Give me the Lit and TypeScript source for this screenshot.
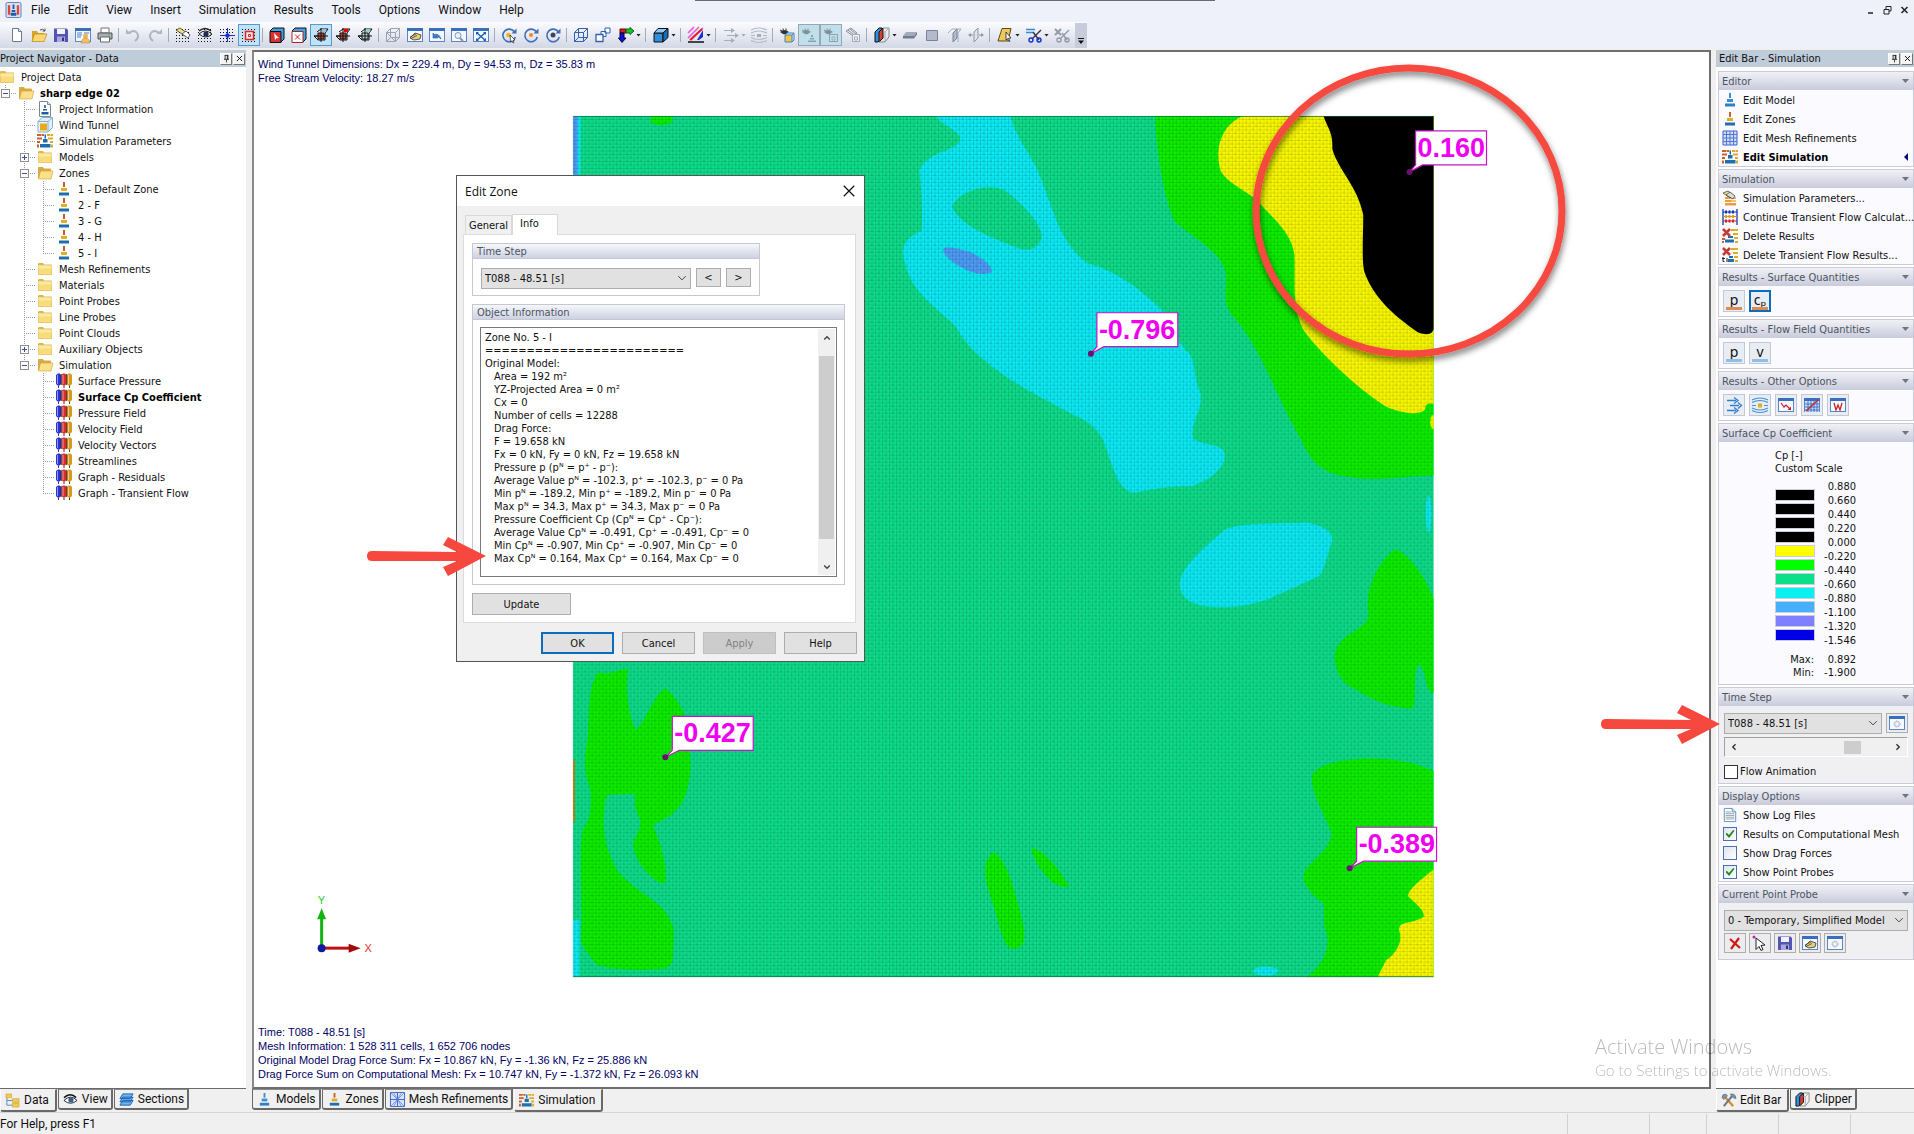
import { LitElement, html, svg, css, nothing } from "lit";
import { customElement, property, state } from "lit/decorators.js";
import { classMap } from "lit/directives/class-map.js";

/* ------------------------------------------------------------------ */
/* Icons, all on a 16 x 16 grid                                        */
/* ------------------------------------------------------------------ */

const dots = svg`<path d="M1 2.500h15M1 5.500h15M1 8.500h15M1 11.500h15M1 14.500h15" stroke="#111" stroke-dasharray="1 2" fill="none"/>`;
const frame = svg`<rect x=".5" y="1.500" width="15" height="13" fill="#f4f8ff" stroke="#5b86c4"/><path d="M0 1h16v3H0z" fill="#3a6fc0"/>`;
const rotor = svg`<path d="M13.500 5A6.300 6.300 0 1 0 14.300 10" fill="none" stroke="#3f6fb8" stroke-width="1.600"/><path d="M15.500 1.500v5h-5z" fill="#3f6fb8"/>`;
const eye = svg`<path d="M1 5q4-4 9 0l-2 1q-1 2-4 1z" fill="#333"/><path d="M1 3l2 1M4 1.500l.5 2M7 1.500v2" stroke="#333"/>`;
const cubeSolid = svg`<path d="M1 6h9v9H1z" fill="#2f8fdc" stroke="#111"/><path d="M1 6l4-4.500h10L10 6z" fill="#8fcaf5" stroke="#111"/><path d="M10 6l5-4.500v9L10 15z" fill="#1a6cb5" stroke="#111"/>`;
const pens = svg`<path d="M0 2l2-1.500h2L5 2v9l-1.500 1.500h-2L0 11z" fill="#2b33d8"/><path d="M5.500 2L7 .5h2L10.500 2v9L9 12.500H7L5.500 11z" fill="#e02b2b"/><path d="M11 2l1.500-1.500h2L16 2v9l-1.500 1.500h-2L11 11z" fill="#d99a17"/><path d="M1.500 2v9M7 2v9M12.500 2v9" stroke="#fff" stroke-opacity=".5"/><path d="M5.200 1v11M10.700 1v11M2.500 12.500v2.500M8 12.500v2.500M13.500 12.500v2.500" stroke="#222" stroke-width=".9"/>`;
const zone = (a: string, b: string, c: string) =>
  svg`<path d="M7 1h2v5H7z" fill="${a}"/><path d="M5 7h6v3H5z" fill="${b}"/><path d="M3 11.500h10v3H3z" fill="${c}"/>`;
const simul = svg`<path d="M0 1h4v2H0zM4.500 1H7v2H4.500zM0 4.500h5v2H0zM0 8h3v2H0zM0 11.500h2v3H0z" fill="#c9622a"/><path d="M10 1h3v2h-3zM13.500 1H16v2h-2.500zM11 4.500h5v2h-5zM13 8h3v2h-3zM14 11.500h2v3h-2z" fill="#dfa92a"/><path d="M7.500 1.500h1.500v4H7.500zM6 6h4.500v3.500H6zM3 11h10.500v3.500H3z" fill="#1f6fae"/>`;
const cross = (f: string, g: string) =>
  svg`<path d="M4 5l4-3h7l-3 4v7H5L1 9h8" fill="#d9ecef" stroke="#111"/><path d="M5 6h6v6H5z" fill="${f}" stroke="#111"/><path d="M8 1v14M1 9h14" stroke="#111"/><path d="M9 2h4v3H9z" fill="${g}"/>`;

const ICONS: Record<string, unknown> = {
  app: svg`<rect width="16" height="16" rx="1.500" fill="#d5e2f6" stroke="#5c7fb8"/><path d="M2 3h2.500v10H2zM11.500 3H14v10h-2.500z" fill="#e2452f"/><path d="M7 2h2v5H7zM6 8h4v2H6zM5 11h6v3H5z" fill="#2458a8"/>`,
  new: svg`<path d="M3.500 1.500h6l3 3v10h-9z" fill="#fff" stroke="#6b7a94"/><path d="M9.500 1.500v3h3" fill="#dfe6f2" stroke="#6b7a94"/>`,
  open: svg`<path d="M1 4h5l1 2h6v8H1z" fill="#d9a52b"/><path d="M3.500 7H16l-3 7.500H1z" fill="#fbd76d" stroke="#b8861c" stroke-width=".7"/><path d="M9 3q3-2 5 1m0-2.500V4h-2.500" stroke="#555" fill="none"/>`,
  save: svg`<path d="M1 1.500h12.500L15 3v12H1z" fill="#5454b4"/><path d="M4 2h8v5H4z" fill="#f2f2fb"/><path d="M4 9.500h8V15H4z" fill="#a9a9dd"/><path d="M9 10.500h2V14H9z" fill="#33337e"/>`,
  report: svg`${frame}<path d="M2 6h5M2 8h5M2 10h4M9 6h5" stroke="#4d7fc4"/><circle cx="10.500" cy="9" r="2.500" fill="#f0b45c"/><path d="M6 16q1-5 4.500-5t4.500 5z" fill="#f0c069" stroke="#b07f2a" stroke-width=".5"/>`,
  print: svg`<path d="M4 1h8v5H4z" fill="#fff" stroke="#777"/><path d="M1 6h14v6H1z" fill="#a8adb8" stroke="#555"/><path d="M3.500 10h9v5h-9z" fill="#fff" stroke="#666"/><path d="M11 8h2" stroke="#3c3"/>`,
  undo: svg`<path d="M4 6q5-4 8 0t-2 8" fill="none" stroke="#aeb6c6" stroke-width="2"/><path d="M1 7V2l5.500 5z" fill="#aeb6c6"/>`,
  redo: svg`<path d="M12 6q-5-4-8 0t2 8" fill="none" stroke="#aeb6c6" stroke-width="2"/><path d="M15 7V2L9.500 7z" fill="#aeb6c6"/>`,
  gridHand: svg`${dots}<path d="M1 3l4-2 7 5-2 3z" fill="#f4dc7a" stroke="#222" stroke-width=".7"/><path d="M7 7l4-3 4 4-2 3z" fill="#fff" stroke="#222" stroke-width=".7"/>`,
  gridEye: svg`${dots}<path d="M2 7q6-6 13 0-6 6-13 0z" fill="#eee" stroke="#222"/><circle cx="9" cy="7" r="2.600" fill="#1d2a55"/><path d="M2 4q6-5 12 0" stroke="#222" stroke-width="1.500" fill="none"/>`,
  gridCross: svg`${dots}<path d="M8.500 1v14M1 8.500h15" stroke="#1630c8"/><circle cx="8.500" cy="8.500" r="2.200" fill="#1630c8"/>`,
  gridSnap: svg`${dots}<path d="M4.500 4.500h8v8h-8z" fill="#fbe4e4" stroke="#d62828" stroke-width="1.500"/><path d="M7.500 7.500h2v2h-2z" fill="none" stroke="#d62828"/>`,
  cubeSel: svg`<path d="M1 4l3-3h11v11l-3 3" fill="#3aa4e8" stroke="#111"/><path d="M1 4.500h11v11H1z" fill="#d93030" stroke="#111"/><path d="M5 6l5 5-2.500.3L6 13z" fill="#fff"/>`,
  cubeX: svg`<path d="M1 4l3-3h11v11l-3 3" fill="#3aa4e8" stroke="#111"/><path d="M1 4.500h11v11H1z" fill="#fff" stroke="#a22"/><path d="M4 7.500l5 5M9 7.500l-5 5" stroke="#d62020"/>`,
  cp1: cross("#c8453a", "#9bd"),
  cp2: cross("#c8453a", "#f00000"),
  cp3: cross("#b9d8d8", "#9cc"),
  cubeGray: svg`<path d="M1.500 5.500h9v9h-9zM1.500 5.500l4-4h9l-4 4M14.500 1.500v9l-4 4M5.500 1.500v9h9M5.500 10.500l-4 4M1.500 5.500l9 9" fill="none" stroke="#9ba3b3"/>`,
  winHand: svg`${frame}<path d="M3 11l5-5 6 2-1 4-6 1z" fill="#e8cf7a" stroke="#333" stroke-width=".8"/><path d="M3 10l6-3M4 11.500l6-3" stroke="#333" stroke-width=".7"/>`,
  winBack: svg`${frame}<path d="M4 11V6l1.500 1.500Q10 6 12 12 9 9 7.500 9.500L9 11z" fill="#3f7fd0" stroke="#26599f" stroke-width=".6"/>`,
  winZoom: svg`${frame}<circle cx="7" cy="8.500" r="3" fill="#e6f2fb" stroke="#8795aa"/><path d="M9 11l3 3" stroke="#8795aa" stroke-width="2"/>`,
  winFit: svg`${frame}<path d="M4 6l8 7M12 6l-8 7" stroke="#1f5fb4" stroke-width="1.500"/><path d="M3 5h3L3 8zM13 5h-3l3 3zM3 14h3l-3-3zM13 14h-3l3-3z" fill="#1f5fb4"/>`,
  rotSel: svg`${rotor}<circle cx="7.500" cy="8" r="2.300" fill="#f0b429"/><path d="M9 8l5 5-2 .3 1 2.200-1 .5-1-2.200L9.500 15z" fill="#fff" stroke="#222" stroke-width=".7"/>`,
  rotDot: svg`${rotor}<circle cx="8" cy="8" r="2" fill="#f08a29"/>`,
  rotEye: svg`${rotor}<circle cx="8" cy="8" r="2.500" fill="#445"/>`,
  cubeWire: svg`<path d="M1.500 5.500h9v9h-9zM1.500 5.500l4-4h9l-4 4M14.500 1.500v9l-4 4M5.500 1.500v9h9M5.500 10.500l-4 4" fill="none" stroke="#2f63b0"/>`,
  squares: svg`<path d="M10 1h5v5h-5zM6 4.500h5v5H6z" fill="#fff" stroke="#2f63b0"/><path d="M1 7.500h7v7H1z" fill="#fff" stroke="#2f63b0" stroke-width="1.300"/>`,
  axes: svg`<path d="M2 2h6v4H2z" fill="#d62020" stroke="#600"/><path d="M8 2h4V.5L16 4l-4 3.500V6H8z" fill="#1fc41f" stroke="#062"/><path d="M2 6h4v5h2l-4 4.500L.5 11H2z" fill="#1111d0" stroke="#004"/>`,
  cube: cubeSolid,
  stripes: svg`<path d="M0 6l6-6M0 11L11 0M3 13L15 1" stroke="#ee55dd" stroke-width="1.600"/><path d="M2 13L14 2" stroke="#e02020" stroke-width="1.800"/><path d="M9 13l6-10v7l-4 3z" fill="#1c2fd0"/><path d="M0 15h16" stroke="#111" stroke-width="1.500"/>`,
  flowGray: svg`<path d="M1 3.500h9M4 8.500h10M1 13.500h9" stroke="#a7aebb" stroke-width="1.200"/><path d="M8 1l4 2.500L8 6zM12 6l4 2.500-4 2.500zM8 11l4 2.500L8 16z" fill="#a7aebb"/>`,
  streamGray: svg`<path d="M0 3q8-4 16 0M0 6q8-4 16 0M0 10.500q8 4 16 0M0 13.500q8 4 16 0M0 8.500h4M12 8.500h4" fill="none" stroke="#b3bac6" stroke-width="1.200"/><path d="M6 7h4v3H6z" fill="#a7aebb"/>`,
  eyeCube: svg`${eye}<path d="M6 8h7v7H6z" fill="#f4c542" stroke="#3b84c4"/><path d="M6 8l2-2h7v7l-2 2M13 8l2-2" fill="none" stroke="#3b84c4"/>`,
  eyeZone: svg`<g opacity=".45">${eye}<path d="M10 8h2v2h-2zM9 11h4v1.500H9zM7 13.500h8V15H7z" fill="#556"/></g>`,
  eyeBox: svg`<g opacity=".45">${eye}<path d="M6.500 7.500h8v7h-8z" fill="none" stroke="#556"/><path d="M9 10h3v3H9z" fill="none" stroke="#778"/></g>`,
  copyGray: svg`<path d="M1 4l5-3 6 5-4 3z" fill="#e2e5ea" stroke="#8c93a0"/><path d="M3 3l6 5M5 2l6 5" stroke="#8c93a0"/><path d="M7.500 7.500h7v7h-7z" fill="#eef0f4" stroke="#a4abb7"/><path d="M9.500 10h3v3h-3z" fill="none" stroke="#a4abb7"/>`,
  clip: svg`<path d="M1 5l4-4h3v10l-4 4H1z" fill="#2f8fdc" stroke="#111"/><path d="M5 5l4-4v10l-4 4z" fill="#d6402f" stroke="#111"/><path d="M9 1h6v9l-4 5H5" fill="none" stroke="#888"/><path d="M11 5v10M9 5h2l4-4" fill="none" stroke="#aaa"/>`,
  planeA: svg`<path d="M4 5h11l-3 4H1z" fill="#a3abbb"/><path d="M1 9h11v2.500H1zM12 9l3-4v2.500l-3 4z" fill="#717b90"/>`,
  planeB: svg`<path d="M2.500 3.500h11v10h-11z" fill="#b3bacb" stroke="#7a8499"/>`,
  planeC: svg`<path d="M2 6l4-4h9l-3 4v9" fill="none" stroke="#a2aabb"/><path d="M7 6l4-4v9l-4 4z" fill="#b3bacb" stroke="#7a8499"/>`,
  planeD: svg`<path d="M6 5l4-4v10l-4 4zM1 8h4M11 8h4" fill="#dfe3ea" stroke="#8e97a8"/><path d="M3 6L0 8l3 2zM13 6l3 2-3 2z" fill="#8e97a8"/>`,
  section: svg`<path d="M5 1.500h9L11 14H1z" fill="#f0c75e" stroke="#5a4a18"/><path d="M9 5l5 6-2.500.2 1.500 3-1 .5-1.500-3L9 13z" fill="#fff" stroke="#222" stroke-width=".8"/>`,
  cut: svg`<path d="M0 2.500h9M0 5.500h7" stroke="#2a8fe0" stroke-width="1.600"/><path d="M15 3L6 12M7 5l6 8" stroke="#334" stroke-width="1.400"/><circle cx="5" cy="13" r="2" fill="none" stroke="#1630c8" stroke-width="1.400"/><circle cx="13" cy="13" r="2" fill="none" stroke="#1630c8" stroke-width="1.400"/>`,
  cutGray: svg`<path d="M1 2l6 6M7 2L1 8" stroke="#9299a7" stroke-width="2"/><path d="M15 3L6 12M8 6l5 7" stroke="#9299a7" stroke-width="1.400"/><circle cx="5" cy="13" r="2" fill="none" stroke="#9299a7" stroke-width="1.400"/><circle cx="13" cy="13" r="2" fill="none" stroke="#9299a7" stroke-width="1.400"/>`,
  folder: svg`<path d="M1 3q0-1 1-1h4l1 1.500h7q1 0 1 1V13q0 1-1 1H2q-1 0-1-1z" fill="#e0b74e"/><path d="M1.500 4.500h13v9h-13z" fill="#f8dc7c"/><path d="M1.500 4.500h13v3h-13z" fill="#fbe9a6"/>`,
  folderOpen: svg`<path d="M1 3q0-1 1-1h4l1 1.500h6q1 0 1 1V13H1z" fill="#d9aa45"/><path d="M3.500 6H16l-2 8H1.500z" fill="#fbe08a" stroke="#cf9f3a" stroke-width=".6"/>`,
  info: svg`<path d="M2.500.5h8l3 3v12h-11z" fill="#fff" stroke="#7f8794"/><path d="M10.500.5v3h3" fill="#e5e8ee" stroke="#7f8794"/><path d="M7.200 4h1.600v3H7.200zM6 8h4v1.500H6zM4.500 11h7v2.500h-7z" fill="#1f5f9f"/>`,
  tunnel: svg`<path d="M1 4.500L5 .5h10.500v10L11 15" fill="#dff0fa" stroke="#7fb2d4"/><path d="M1 4.500h10V15H1zM11 4.500l4.500-4" fill="#e8f4fc" stroke="#7fb2d4"/><path d="M3 6.500h7v7H3z" fill="#eaa91c"/>`,
  simul,
  zone: zone("#c9622a", "#e0ae26", "#1f6fae"),
  model: zone("#3d8fd0", "#3d8fd0", "#2f7fc4"),
  pens,
  mesh: svg`<path d="M1 1h14v14H1z" fill="#cfdcf8" stroke="#3f63c8"/><path d="M4.500 1v14M8 1v14M11.500 1v14M1 4.500h14M1 8h14M1 11.500h14" stroke="#5576d0"/>`,
  meshTab: svg`<path d="M.5.5h15v15H.5zM8 .5v15M.5 8h15" fill="#d5e2fa" stroke="#3f63c8"/><path d="M1 1l14 14M15 1L1 15M4 1l4 7-4 7M12 1L8 8l4 7" stroke="#5f86d8" fill="none" stroke-width=".8"/>`,
  simParams: svg`<path d="M3 7h11v2H3zM3 10h11v2H3zM3 13h11v2.500H3z" fill="#ee9a3a"/><path d="M6 7h8v1.500H6zM9 10h5v2H9z" fill="#f7c168"/><path d="M1 3l5-2 5 4-3 3z" fill="#f2dc8c" stroke="#333" stroke-width=".7"/><path d="M4 5l4-3 5 4-2 3z" fill="#ddd" stroke="#333" stroke-width=".7"/>`,
  abacus: svg`<path d="M1 0v16M15 0v16" stroke="#2a55b8" stroke-width="1.500"/><path d="M1 3h14" stroke="#1630c8"/><path d="M1 7.500h14" stroke="#c98a20"/><path d="M1 12h14" stroke="#d02020"/><path d="M3 3h10" stroke="#1630c8" stroke-width="3" stroke-dasharray="2 1.500"/><path d="M3 7.500h10" stroke="#e0a020" stroke-width="3" stroke-dasharray="2 1.500"/><path d="M3 12h10" stroke="#d02020" stroke-width="3" stroke-dasharray="2 1.500"/>`,
  delRes: svg`<path d="M9 1h7v2H9zM11 5h5v2h-5zM12 9h4v2h-4zM13 13h3v2h-3z" fill="#e0ae26"/><path d="M6 8h5v2H6zM3 11.500h9v3H3z" fill="#1f6fae"/><path d="M0 10h3v2H0zM0 13h2v2H0z" fill="#c9622a"/><path d="M1 1l7 7M8 1L1 8" stroke="#c53a34" stroke-width="2.600"/>`,
  delTrans: svg`<path d="M9 1h7v2H9zM11 5h5v2h-5zM12 9h4v2h-4zM13 13h3v2h-3z" fill="#e0ae26"/><path d="M7 9h4v2H7zM6 12h6v3H6z" fill="#1f6fae"/><path d="M1 10v4.500h1.500M0 11.500h3M4 12h2M4 14h2" stroke="#222" fill="none"/><path d="M1 1l7 7M8 1L1 8" stroke="#c53a34" stroke-width="2.600"/>`,
  flow: svg`<path d="M1 3.500h9M4 8.500h9M1 13.500h9" stroke="#2f7fd0" stroke-width="1.300"/><path d="M8 .5l4 3-4 3M12 5.500l3.500 3-3.500 3M8 10.500l4 3-4 3" fill="none" stroke="#2f7fd0" stroke-width="1.300"/>`,
  stream: svg`<path d="M0 3q8-4 16 0M0 5.500q8-4 16 0M0 11q8 4 16 0M0 13.500q8 4 16 0M0 8.500h4M12 8.500h4" fill="none" stroke="#3f93d6" stroke-width="1.200"/><path d="M6 6.500h4v4H6z" fill="#efa91c"/>`,
  winRes: svg`${frame}<path d="M3 6l3 4 2-2 4 4" fill="none" stroke="#d02020" stroke-width="1.200"/><path d="M13 9.500V13H9.500z" fill="#d02020"/>`,
  winMesh: svg`${frame}<path d="M1 4h14v11H1z" fill="#cfe0f8"/><path d="M4 4v11M7 4v11M10 4v11M13 4v11M1 7h14M1 10h14M1 13h14" stroke="#3f73c8"/><path d="M2 14L14 3" stroke="#d02020" stroke-width="1.300"/>`,
  winW: svg`${frame}<path d="M4 6l2 7 2-5 2 5 2-7" fill="none" stroke="#d02020" stroke-width="1.300"/>`,
  winGear: svg`${frame}<circle cx="8" cy="9" r="3" fill="#d9dde6" stroke="#a0a8b8" stroke-dasharray="1.500 1"/><circle cx="8" cy="9" r="1" fill="#fff"/>`,
  log: svg`<path d="M1.500.5h9l4 4v11h-13z" fill="#fff" stroke="#4a8fc0"/><path d="M10.500.5v4h4" fill="#cfe6f4" stroke="#4a8fc0"/><path d="M3 4.500h6M3 6.500h10M3 8.500h10M3 10.500h10M3 12.500h10" stroke="#8c98a6"/>`,
  del: svg`<path d="M3 4l10 9M12 3L4 14" stroke="#d01818" stroke-width="2.200"/>`,
  pick: svg`<circle cx="2" cy="2" r="1.500" fill="#c020c0"/><path d="M4 3l9 7-4 .5 2 4-2 1-2-4-3 3z" fill="#fff" stroke="#222"/>`,
  dataTab: svg`<path d="M2 3v10h6M2 8h6" fill="none" stroke="#5588bb"/><path d="M1 1h6v4H1zM8 6h7v4H8zM8 11h7v4H8z" fill="#f1ca50" stroke="#c79a2c" stroke-width=".6"/>`,
  viewTab: svg`<path d="M1 9q7-7 14 0-7 6-14 0z" fill="#fff" stroke="#222"/><circle cx="8.500" cy="8.500" r="2.800" fill="#3a5f8f"/><path d="M1 6q7-6 13 0" stroke="#111" stroke-width="1.600" fill="none"/>`,
  sectTab: svg`<path d="M4 9h11l-3 5H1zM4 5.500h11l-3 5H1zM4 2h11l-3 5H1z" fill="#6fb4f0" stroke="#1d5fae"/>`,
  tools: svg`<path d="M3 3l10 11" stroke="#d6902c" stroke-width="2.400"/><path d="M12 3L3 14" stroke="#6b7788" stroke-width="2.200"/><path d="M1 5q0-4 4-4l2 2-4 4zM10 1q1 3 3 4l3 1q0-4-3-5z" fill="#7c93ad" stroke="#455" stroke-width=".5"/>`,
  pin: svg`<path d="M3.500 9.500h9M5.500 2v7.500M10.500 2v7.500M5 2.500h6M9.500 2v7M8 10v5" stroke="#111" stroke-width="1.400"/>`,
  close: svg`<path d="M3.500 3.500l9 9M12.500 3.500l-9 9" stroke="#111" stroke-width="1.700"/>`,
  closeThin: svg`<path d="M2 2l12 12M14 2L2 14" stroke="#111" stroke-width="1.400"/>`,
  chev: svg`<path d="M3 5.500l5 5 5-5" fill="none" stroke="#444" stroke-width="1.300"/>`,
  up: svg`<path d="M3.500 10.500L8 6l4.500 4.500" fill="none" stroke="#444" stroke-width="2.200"/>`,
  down: svg`<path d="M3.500 5.500L8 10l4.500-4.500" fill="none" stroke="#444" stroke-width="2.200"/>`,
  left: svg`<path d="M10.500 3.500L6 8l4.500 4.500" fill="none" stroke="#333" stroke-width="2.200"/>`,
  right: svg`<path d="M5.500 3.500L10 8l-4.500 4.500" fill="none" stroke="#333" stroke-width="2.200"/>`,
};

@customElement("ui-icon")
class UiIcon extends LitElement {
  @property() name = "";
  static styles = css`
    :host { display: inline-block; width: 16px; height: 16px; flex: none; }
    .glyph { display: block; width: 100%; height: 100%; overflow: visible; }
  `;
  render() {
    return html`<svg class="glyph" viewBox="0 0 16 16" aria-hidden="true">${ICONS[this.name] ?? nothing}</svg>`;
  }
}

/* ------------------------------------------------------------------ */
/* Data                                                                */
/* ------------------------------------------------------------------ */

const MENU = ["File", "Edit", "View", "Insert", "Simulation", "Results", "Tools", "Options", "Window", "Help"];

type Tool = { icon: string; label: string; menu?: boolean; on?: boolean; off?: boolean } | "|";
const t = (icon: string, label: string, extra = {}): Tool => ({ icon, label, ...extra });
const TOOLS: Tool[] = [
  t("new", "New"), t("open", "Open"), t("save", "Save"), t("report", "Report"), t("print", "Print"), "|",
  t("undo", "Undo"), t("redo", "Redo"), "|",
  t("gridHand", "Edit grid"), t("gridEye", "Show grid"), t("gridCross", "Grid origin"), t("gridSnap", "Snap", { on: true }), "|",
  t("cubeSel", "Select"), t("cubeX", "Deselect"), t("cp1", "Plane XY", { on: true }), t("cp2", "Plane YZ"), t("cp3", "Plane XZ"), "|",
  t("cubeGray", "Wireframe"), t("winHand", "Pan"), t("winBack", "Previous view"), t("winZoom", "Zoom"), t("winFit", "Fit"), "|",
  t("rotSel", "Rotate selection"), t("rotDot", "Rotate"), t("rotEye", "Rotate view"), "|",
  t("cubeWire", "Isometric"), t("squares", "Windows"), t("axes", "Axes", { menu: true }), "|",
  t("cube", "Solid", { menu: true }), "|", t("stripes", "Colours", { menu: true }), "|",
  t("flowGray", "Vectors", { menu: true, off: true }), t("streamGray", "Streamlines"), "|",
  t("eyeCube", "Show model"), t("eyeZone", "Show zones", { off: true, on: true }), t("eyeBox", "Show tunnel", { off: true, on: true }), t("copyGray", "Copy"), "|",
  t("clip", "Clipper", { menu: true }), t("planeA", "Clip Z"), t("planeB", "Clip Y"), t("planeC", "Clip X"), t("planeD", "Move clip"), "|",
  t("section", "Section", { menu: true }), t("cut", "Cut", { menu: true }), t("cutGray", "Remove cut"),
];

interface Node { text: string; icon: string; guides: string; bold?: boolean }
/* guides: one letter per column. b blank, v line through, t branch, e last branch, p/m expander (P/M: last) */
const n = (guides: string, icon: string, text: string, bold = false): Node => ({ guides, icon, text, bold });
const TREE: Node[] = [
  n("", "folder", "Project Data"),
  n("M", "folderOpen", "sharp edge 02", true),
  n("bt", "info", "Project Information"),
  n("bt", "tunnel", "Wind Tunnel"),
  n("bt", "simul", "Simulation Parameters"),
  n("bp", "folder", "Models"),
  n("bm", "folderOpen", "Zones"),
  n("bvt", "zone", "1 - Default Zone"),
  n("bvt", "zone", "2 - F"),
  n("bvt", "zone", "3 - G"),
  n("bvt", "zone", "4 - H"),
  n("bve", "zone", "5 - I"),
  n("bt", "folder", "Mesh Refinements"),
  n("bt", "folder", "Materials"),
  n("bt", "folder", "Point Probes"),
  n("bt", "folder", "Line Probes"),
  n("bt", "folder", "Point Clouds"),
  n("bp", "folder", "Auxiliary Objects"),
  n("bM", "folderOpen", "Simulation"),
  n("bbt", "pens", "Surface Pressure"),
  n("bbt", "pens", "Surface Cp Coefficient", true),
  n("bbt", "pens", "Pressure Field"),
  n("bbt", "pens", "Velocity Field"),
  n("bbt", "pens", "Velocity Vectors"),
  n("bbt", "pens", "Streamlines"),
  n("bbt", "pens", "Graph - Residuals"),
  n("bbe", "pens", "Graph - Transient Flow"),
];

const INFO = [
  "Area = 192 m²", "YZ-Projected Area = 0 m²", "Cx = 0", "Number of cells = 12288", "Drag Force:",
  "F = 19.658 kN", "Fx = 0 kN, Fy = 0 kN, Fz = 19.658 kN", "Pressure p (pᴺ = p⁺ - p⁻):",
  "Average Value pᴺ = -102.3, p⁺ = -102.3, p⁻ = 0 Pa", "Min pᴺ = -189.2, Min p⁺ = -189.2, Min p⁻ = 0 Pa",
  "Max pᴺ = 34.3, Max p⁺ = 34.3, Max p⁻ = 0 Pa", "Pressure Coefficient Cp (Cpᴺ = Cp⁺ - Cp⁻):",
  "Average Value Cpᴺ = -0.491, Cp⁺ = -0.491, Cp⁻ = 0", "Min Cpᴺ = -0.907, Min Cp⁺ = -0.907, Min Cp⁻ = 0",
  "Max Cpᴺ = 0.164, Max Cp⁺ = 0.164, Max Cp⁻ = 0",
];

const SCALE = ["0.880", "0.660", "0.440", "0.220", "0.000", "-0.220", "-0.440", "-0.660", "-0.880", "-1.100", "-1.320", "-1.546"];
const COLORS = ["#000", "#000", "#000", "#000", "#ffff00", "#00ff00", "#0ae08a", "#0af0f0", "#46b0ff", "#807fff", "#0000e6"];

const PROBES = [
  { x: 1416, y: 131, w: 71, px: 1410, py: 172, v: "0.160" },
  { x: 1097, y: 313, w: 81, px: 1091, py: 354, v: "-0.796" },
  { x: 672, y: 717, w: 81, px: 665, py: 758, v: "-0.427" },
  { x: 1357, y: 828, w: 80, px: 1350, py: 869, v: "-0.389" },
];

/* ------------------------------------------------------------------ */
/* Shared styles                                                       */
/* ------------------------------------------------------------------ */

const base = css`
  *, *::before, *::after { box-sizing: border-box; }
  button, select, input { font: inherit; color: inherit; margin: 0; padding: 0; border-radius: 0; }
  .select { position: relative; display: flex; flex: 1; min-width: 0; }
  .select select {
    appearance: none; width: 100%; height: 21px; padding: 0 20px 0 3px;
    background: #e1e1e1; border: 1px solid #adadad; outline: none;
  }
  .select ui-icon { position: absolute; right: 3px; top: 4px; width: 12px; height: 12px; pointer-events: none; }
`;

const select = (id: string, label: string, value: string) => html`
  <span class="select"><select id=${id} aria-label=${label}><option>${value}</option></select><ui-icon name="chev"></ui-icon></span>`;

/* ------------------------------------------------------------------ */
/* Docked panel caption and bottom tabs                                */
/* ------------------------------------------------------------------ */

@customElement("panel-caption")
class PanelCaption extends LitElement {
  @property() text = "";
  static styles = [base, css`
    :host { display: flex; align-items: center; height: 17px; background: #bfccda; color: #111; padding-right: 1px; gap: 1px; flex: none; }
    .text { flex: 1; white-space: nowrap; }
    .btn { width: 12px; height: 12px; background: #f4f4f4; border: 1px solid; border-color: #fff #777 #777 #fff; display: flex; align-items: center; justify-content: center; }
    .btn ui-icon { width: 9px; height: 9px; }
  `];
  render() {
    return html`<span class="text">${this.text}</span>
      <button class="btn" aria-label="Pin"><ui-icon name="pin"></ui-icon></button>
      <button class="btn" aria-label="Close"><ui-icon name="close"></ui-icon></button>`;
  }
}

@customElement("dock-tabs")
class DockTabs extends LitElement {
  @property({ attribute: false }) tabs: [string, string][] = [];
  @state() active = "";
  @property() current = "";
  static styles = [base, css`
    :host { display: flex; align-items: flex-start; height: 23px; flex: none; gap: 1px; }
    .tab {
      display: flex; align-items: center; gap: 4px; height: 21px; padding: 0 3px 0 4px; white-space: nowrap;
      background: #f0f0f0; border: 1px solid #696969; border-top-color: #8a8a8a; border-width: 1px 2px 2px 1px;
      border-radius: 0 0 3px 3px; font: 12px Roboto, "Open Sans", sans-serif; color: #111;
    }
    .current { height: 23px; border-top-color: #f0f0f0; border-left-color: #fff; padding-right: 6px; }
    .tab ui-icon { width: 15px; height: 15px; }
  `];
  render() {
    return this.tabs.map(([icon, text]) => html`
      <button class=${classMap({ tab: true, current: (this.active || this.current) === text })}
        @click=${() => (this.active = text)}><ui-icon name=${icon}></ui-icon>${text}</button>`);
  }
}

/* ------------------------------------------------------------------ */
/* Navigator tree                                                      */
/* ------------------------------------------------------------------ */

@customElement("project-tree")
class ProjectTree extends LitElement {
  static styles = css`
    :host { display: block; flex: 1; overflow: hidden; background: #fff; padding-top: 2px; }
    .rows { list-style: none; margin: 0 0 0 -4px; padding: 0; }
    .row { display: flex; align-items: center; height: 16px; white-space: nowrap; color: #111; }
    .guide { width: 19px; height: 16px; flex: none; display: block; overflow: visible; }
    .row ui-icon { margin: 0 6px 0 3px; }
    .bold { font-weight: bold; color: #000; }
  `;
  private guide(k: string) {
    const last = k === "e" || k === "M" || k === "P";
    const box = "pmPM".includes(k);
    return html`<svg class="guide" viewBox="0 0 19 16">
      ${k === "b" ? nothing : svg`<path d="M9.500 0v${last ? 8 : 16}${k === "v" ? "" : "M9 8.500h12"}" stroke="#999" stroke-dasharray="1 1" fill="none"/>`}
      ${box ? svg`<rect x="5.500" y="4.500" width="8" height="8" fill="#fdfdfd" stroke="#8f8f8f"/><path d="M7 8.500h5${k.toLowerCase() === "p" ? "M9.500 6v5" : ""}" stroke="#3c50a0" fill="none"/>` : nothing}
    </svg>`;
  }
  render() {
    return html`<ul class="rows">${TREE.map((r) => html`
      <li class="row">${[...r.guides].map((g) => this.guide(g))}<ui-icon name=${r.icon}></ui-icon><span class=${r.bold ? "bold" : ""}>${r.text}</span></li>`)}</ul>`;
  }
}

/* ------------------------------------------------------------------ */
/* Pressure contour plot                                               */
/* ------------------------------------------------------------------ */

@customElement("contour-plot")
class ContourPlot extends LitElement {
  static styles = css`
    :host { display: block; }
    .plot { display: block; width: 100%; height: 100%; }
    .value { font: bold 27px "Liberation Sans", Arial, sans-serif; fill: #f000f0; }
    .axis { font: 11px "Liberation Sans", Arial, sans-serif; }
  `;
  render() {
    return html`<svg class="plot" viewBox="254 52 1455 1036" role="img" aria-label="Surface Cp coefficient">
      <defs>
        <pattern id="mesh" width="7" height="7" patternUnits="userSpaceOnUse">
          <path d="M0 .5h7M0 4h7M.5 0v7M4 0v7" stroke="#000" stroke-opacity=".12"/>
          <path d="M0 3.500L3.500 0M3.500 7L7 3.500M0 3.500L3.500 7M3.500 0L7 3.500" stroke="#000" stroke-opacity=".12" stroke-width=".7"/>
        </pattern>
        <clipPath id="face"><path d="M22 28H1523V1530H22z"/></clipPath>
      </defs>
      <g transform="translate(560 100) scale(.574)" clip-path="url(#face)">
        <path d="M22 28H1523V1530H22z" fill="#0ee28e"/>
        <g fill="#0cf0fa">
          <path fill-rule="evenodd" d="M655 28C665 45 700 55 697 70C690 90 640 90 626 122C628 150 632 170 630 228C600 240 592 260 600 280C610 330 640 350 690 395C710 440 780 490 860 530C900 555 925 555 945 590C965 640 970 680 1000 685C1030 680 1060 672 1100 674C1140 660 1165 635 1157 612C1145 598 1115 602 1103 590C1098 560 1122 540 1116 510C1105 490 1108 455 1095 440C1070 420 1060 370 1040 358C1000 320 960 295 920 285C870 250 860 190 835 130C825 100 795 70 785 28ZM683 185C700 155 750 145 775 158C800 175 840 215 840 240C830 265 810 265 790 255C750 240 690 215 683 185Z"/>
          <path d="M1080 850C1078 820 1110 790 1160 748C1200 735 1250 740 1300 737C1320 740 1348 750 1346 768C1335 800 1330 830 1320 832C1290 845 1260 860 1230 872C1190 885 1150 887 1125 883C1100 878 1085 870 1080 850Z"/>
          <ellipse cx="1230" cy="1519" rx="22" ry="8"/><ellipse cx="1514" cy="722" rx="5" ry="32"/>
          <path d="M22 1430h11v100H22zM28 28h7v102h-7z"/>
        </g>
        <path fill="#4f9ffa" d="M667 262C670 250 700 262 715 265C735 275 755 290 752 300C735 308 715 300 700 292C685 285 672 275 667 262ZM22 28h8v102h-8z"/>
        <g fill="#0df500">
          <path d="M1037 28C1040 90 1050 160 1070 210C1100 240 1150 260 1160 300C1165 330 1150 350 1175 380C1220 430 1250 520 1290 590C1310 630 1320 645 1360 655C1420 668 1480 655 1523 655V28Z"/>
          <path d="M1455 784C1430 800 1400 850 1410 900C1400 930 1350 930 1350 975C1355 1010 1370 1020 1390 1030C1420 1050 1450 1060 1485 1062C1495 1050 1485 1010 1495 985C1510 990 1505 1010 1515 1030L1523 1035V870C1515 850 1505 830 1485 805C1475 795 1465 785 1455 784Z"/>
          <path d="M1310 1180C1320 1150 1400 1145 1450 1150C1490 1155 1510 1165 1523 1170V1530H1300C1325 1515 1345 1480 1335 1450C1325 1420 1340 1400 1322 1395C1305 1380 1290 1360 1298 1345C1310 1325 1340 1310 1345 1280C1330 1240 1310 1210 1310 1180Z"/>
          <path d="M66 998C85 1005 105 990 118 993C112 1030 120 1080 132 1098C150 1080 165 1035 183 1026C200 1040 225 1070 222 1110C230 1160 228 1190 215 1220C200 1250 175 1255 162 1265C165 1280 185 1310 184 1365C165 1370 130 1330 127 1300C128 1280 150 1270 132 1240C128 1230 132 1210 128 1210C105 1212 85 1208 80 1215C70 1260 75 1300 100 1345C140 1390 190 1400 198 1450C195 1500 200 1510 180 1515C130 1520 70 1515 60 1505C50 1490 40 1480 36 1465C40 1400 30 1300 40 1270C50 1260 55 1240 52 1200C42 1180 40 1150 48 1110C50 1070 48 1020 66 998Z"/>
          <path d="M756 1312C735 1325 738 1355 750 1390C765 1430 770 1480 790 1481C815 1480 812 1450 800 1410C790 1370 775 1320 756 1312Z"/>
          <path d="M822 1304C820 1320 845 1355 862 1367C875 1372 890 1378 885 1368C870 1340 845 1310 822 1304Z"/>
          <ellipse cx="176" cy="34" rx="20" ry="10"/>
        </g>
        <g fill="#ffff00">
          <path d="M1190 28C1150 45 1140 90 1152 125C1165 145 1190 155 1215 175C1240 205 1275 230 1280 270C1282 320 1275 360 1295 400C1330 450 1400 510 1440 535C1470 548 1500 550 1508 540C1508 525 1520 530 1523 530V28Z"/>
          <path d="M1523 1342C1500 1360 1480 1375 1478 1388C1490 1400 1510 1415 1505 1425C1480 1440 1460 1430 1463 1450C1470 1470 1455 1490 1440 1500L1425 1530H1523Z"/>
          <path d="M22 1150h3v110h-3z" fill="#c58a10"/><ellipse cx="1521" cy="562" rx="4" ry="12"/>
        </g>
        <path fill="#000" d="M1331 28C1335 45 1348 55 1346 85C1355 120 1390 150 1400 200C1400 240 1397 280 1402 300C1420 350 1460 380 1495 405C1515 412 1520 407 1523 400V28Z"/>
      </g>
      <rect x="572" y="116" width="862" height="862" fill="url(#mesh)"/>
      <path d="M573 116.500h861M573 977.500h861" stroke="#0a6b44" stroke-opacity=".7"/>
      ${PROBES.map((p) => svg`
        <path d="M${p.x} ${p.y}h${p.w}v34h${-p.w + 7}L${p.px} ${p.py}L${p.x} ${p.y + 34}z" fill="#fff" stroke="#c414c4" stroke-width="1.200"/>
        <circle cx="${p.px}" cy="${p.py}" r="3" fill="#6a1070"/>
        <text class="value" x="${p.x + 2}" y="${p.y + 26}">${p.v}</text>`)}
      <path d="M321 949V916" stroke="#11b411" stroke-width="3"/><path d="M321 909l4.500 11h-9z" fill="#11b411"/>
      <path d="M321 949h30" stroke="#c01010" stroke-width="3"/><path d="M360 949l-12 4.500v-9z" fill="#a00c0c"/>
      <circle cx="321" cy="949" r="4" fill="#0b1aa0"/>
      <text class="axis" x="317" y="905" fill="#2fc42f">Y</text><text class="axis" x="364" y="953" fill="#e03030">X</text>
    </svg>`;
  }
}

/* ------------------------------------------------------------------ */
/* Edit Zone dialog                                                    */
/* ------------------------------------------------------------------ */

@customElement("zone-dialog")
class ZoneDialog extends LitElement {
  static styles = [base, css`
    :host { display: block; width: 409px; background: #f0f0f0; border: 1px solid #555; color: #111; }
    .title { display: flex; align-items: center; justify-content: space-between; height: 30px; padding: 0 8px; background: #fff; font: 12px "Open Sans", "Noto Sans", sans-serif; }
    .x { border: 0; background: none; width: 14px; height: 16px; display: flex; align-items: center; }
    .x ui-icon { width: 14px; height: 14px; }
    .tabs { display: flex; align-items: flex-end; height: 28px; padding-left: 8px; }
    .tab { height: 19px; width: 47px; background: #f0f0f0; border: 1px solid #d9d9d9; border-bottom: 0; }
    .tab.on { height: 21px; width: 46px; background: #fff; text-align: left; padding: 0 0 3px 7px; margin-bottom: -1px; }
    .page { margin: 0 8px 0 6px; padding: 8px 10px 7px 8px; background: #fff; border: 1px solid #dcdcdc; display: flex; flex-direction: column; gap: 8px; align-items: flex-start; }
    .group { border: 1px solid #c4c8d4; width: 100%; }
    .step { width: 288px; }
    .head { height: 15px; padding-left: 4px; line-height: 15px; background: linear-gradient(#f6f7fb, #cdd1e1); border-bottom: 1px solid #c4c8d4; color: #4a5560; }
    .line { display: flex; gap: 5px; padding: 9px 8px 6px; align-items: flex-start; }
    .small { width: 25px; height: 19px; background: #e1e1e1; border: 1px solid #adadad; }
    .box { margin: 7px; border: 1px solid #7a7a7a; display: flex; justify-content: space-between; }
    .text { line-height: 13px; padding: 3px 0 11px 4px; white-space: nowrap; }
    .sub { padding-left: 9px; }
    .bar { width: 17px; background: #f0f0f0; display: flex; flex-direction: column; margin: 1px; }
    .bar button { border: 0; background: none; height: 17px; width: 17px; display: flex; align-items: center; justify-content: center; }
    .bar ui-icon { width: 10px; height: 10px; }
    .track { flex: 1; padding: 10px 1px 19px; }
    .thumb { height: 100%; background: #cdcdcd; }
    .push { width: 73px; height: 22px; background: #e1e1e1; border: 1px solid #adadad; text-align: center; }
    .wide { width: 99px; }
    .ok { border: 2px solid #0f6cbd; }
    .off { background: #ccc; border-color: #bfbfbf; color: #838383; }
    .foot { display: flex; justify-content: flex-end; gap: 8px; padding: 9px 7px 7px; }
  `];
  render() {
    return html`
      <div class="title"><span>Edit Zone</span><button class="x" aria-label="Close"><ui-icon name="closeThin"></ui-icon></button></div>
      <div class="tabs"><button class="tab">General</button><button class="tab on">Info</button></div>
      <div class="page">
        <section class="group step">
          <div class="head">Time Step</div>
          <div class="line">${select("dlg-step", "Time Step", "T088 - 48.51 [s]")}<button class="small">&lt;</button><button class="small">&gt;</button></div>
        </section>
        <section class="group">
          <div class="head">Object Information</div>
          <div class="box">
            <div class="text">
              <div>Zone No. 5 - I</div><div>========================</div><div>Original Model:</div>
              ${INFO.map((l) => html`<div class="sub">${l}</div>`)}
            </div>
            <div class="bar">
              <button aria-label="Scroll up"><ui-icon name="up"></ui-icon></button>
              <div class="track"><div class="thumb"></div></div>
              <button aria-label="Scroll down"><ui-icon name="down"></ui-icon></button>
            </div>
          </div>
        </section>
        <button class="push wide">Update</button>
      </div>
      <div class="foot"><button class="push ok">OK</button><button class="push">Cancel</button><button class="push off" disabled>Apply</button><button class="push">Help</button></div>`;
  }
}

/* ------------------------------------------------------------------ */
/* Edit bar                                                            */
/* ------------------------------------------------------------------ */

@customElement("edit-bar")
class EditBar extends LitElement {
  static styles = [base, css`
    :host { display: flex; flex-direction: column; gap: 2px; flex: 1; background: #fff; padding: 4px 0 0 2px; color: #111; overflow: hidden; }
    .group { border: 1px solid #c9cbdc; background: #fafaff; flex: none; }
    .gray { background: #f0f0f2; }
    .head { display: flex; align-items: center; justify-content: space-between; height: 18px; padding: 0 4px 0 3px; background: linear-gradient(#f1f1f6, #c9cbdb); color: #4a5560; }
    .tri { width: 7px; height: 4px; background: #6d7480; clip-path: polygon(0 0, 100% 0, 50% 100%); }
    .item { display: flex; align-items: center; gap: 5px; width: 100%; height: 19px; padding: 1px 0 0 3px; border: 0; background: none; text-align: left; white-space: nowrap; }
    .bold { font-weight: bold; color: #000; }
    .mark { margin-left: auto; margin-right: 5px; width: 4px; height: 8px; background: #0a0a7a; clip-path: polygon(100% 0, 100% 100%, 0 50%); }
    .row { display: flex; gap: 4px; padding: 4px; }
    .sq { width: 22px; height: 22px; background: #e8ecf3; border: 1px solid #c4c8d6; display: flex; align-items: center; justify-content: center; flex-direction: column; }
    .q { font: 14px/14px "Noto Sans", sans-serif; color: #111; }
    .q::after { content: ""; display: block; width: 16px; height: 3px; background: #e08a50; }
    .q.air::after { background: #8fbfe6; }
    .on { border: 2px solid #0f6cbd; }
    .legend { padding: 7px 57px 5px 56px; line-height: 13px; }
    .scale { display: flex; justify-content: space-between; padding-top: 5px; }
    .chips { display: flex; flex-direction: column; gap: 2px; padding-top: 9px; }
    .chip { width: 40px; height: 12px; border: 1px solid #c9ced8; }
    .nums { line-height: 14px; text-align: right; }
    .ext { display: grid; grid-template-columns: 1fr 42px; text-align: right; padding-top: 5px; }
    .pad { padding: 7px 5px 2px; }
    .probe { padding-bottom: 6px; }
    .line { display: flex; gap: 4px; }
    .tools { margin-top: 2px; gap: 3px; }
    .tool { width: 22px; height: 20px; background: #ececf0; border: 1px solid #adadad; display: flex; align-items: center; justify-content: center; }
    .scroll { display: flex; align-items: center; height: 20px; margin-top: 3px; border: 1px solid; border-color: #a0a0a0 #fff #fff #a0a0a0; background: #f0f0f0; }
    .scroll button { width: 18px; height: 17px; border: 0; background: none; display: flex; align-items: center; justify-content: center; }
    .scroll ui-icon { width: 10px; height: 10px; }
    .range { appearance: none; flex: 1; min-width: 0; height: 13px; background: none; }
    .range::-webkit-slider-thumb { appearance: none; width: 17px; height: 13px; background: #cdcdcd; }
    .check { display: flex; align-items: center; gap: 2px; height: 24px; padding-top: 5px; }
    .tick { appearance: none; width: 14px; height: 14px; border: 1px solid #4a6fb5; background: linear-gradient(135deg, #dfe3ec, #fff); flex: none; display: grid; place-items: center; }
    .tick:checked::after { content: ""; width: 9px; height: 9px; background: #1c8a1c; clip-path: polygon(0 50%, 15% 35%, 38% 60%, 85% 5%, 100% 15%, 40% 95%); }
    .plain { border-color: #333; background: #fff; }
    .opt { gap: 6px; padding-left: 4px; }
    .opt ui-icon { width: 14px; }
  `];
  private group(title: string, body: unknown, gray = false) {
    return html`<section class=${classMap({ group: true, gray })}><div class="head"><span>${title}</span><i class="tri"></i></div>${body}</section>`;
  }
  private item(icon: string, text: string, bold = false) {
    return html`<button class=${classMap({ item: true, bold })}><ui-icon name=${icon}></ui-icon><span>${text}</span>${bold ? html`<i class="mark"></i>` : nothing}</button>`;
  }
  private sq(icon: string, label: string) {
    return html`<button class="sq" aria-label=${label}><ui-icon name=${icon}></ui-icon></button>`;
  }
  private tool(icon: string, label: string) {
    return html`<button class="tool" aria-label=${label}><ui-icon name=${icon}></ui-icon></button>`;
  }
  private opt(id: string, text: string, checked: boolean) {
    return html`<label class="item opt" for=${id}><input class="tick" type="checkbox" id=${id} ?checked=${checked}><span>${text}</span></label>`;
  }
  render() {
    return html`
      ${this.group("Editor", html`
        ${this.item("model", "Edit Model")}${this.item("zone", "Edit Zones")}${this.item("mesh", "Edit Mesh Refinements")}${this.item("simul", "Edit Simulation", true)}`)}
      ${this.group("Simulation", html`
        ${this.item("simParams", "Simulation Parameters...")}${this.item("abacus", "Continue Transient Flow Calculat...")}
        ${this.item("delRes", "Delete Results")}${this.item("delTrans", "Delete Transient Flow Results...")}`)}
      ${this.group("Results - Surface Quantities", html`<div class="row"><button class="sq q">p</button><button class="sq q on">cₚ</button></div>`)}
      ${this.group("Results - Flow Field Quantities", html`<div class="row"><button class="sq q air">p</button><button class="sq q air">v</button></div>`)}
      ${this.group("Results - Other Options", html`<div class="row">
        ${this.sq("flow", "Vectors")}${this.sq("stream", "Streamlines")}${this.sq("winRes", "Residuals")}${this.sq("winMesh", "Mesh")}${this.sq("winW", "Transient")}</div>`)}
      ${this.group("Surface Cp Coefficient", html`<div class="legend">
        <div>Cp [-]</div><div>Custom Scale</div>
        <div class="scale">
          <div class="chips">${COLORS.map((c) => html`<i class="chip" style="background:${c}"></i>`)}</div>
          <div class="nums">${SCALE.map((v) => html`<div>${v}</div>`)}</div>
        </div>
        <div class="ext"><span>Max:</span><span>0.892</span><span>Min:</span><span>-1.900</span></div>
      </div>`)}
      ${this.group("Time Step", html`<div class="pad">
        <div class="line">${select("bar-step", "Time Step", "T088 - 48.51 [s]")}${this.tool("winGear", "Settings")}</div>
        <div class="scroll"><button aria-label="Previous"><ui-icon name="left"></ui-icon></button>
          <input class="range" type="range" min="0" max="100" value="78" aria-label="Time step">
          <button aria-label="Next"><ui-icon name="right"></ui-icon></button></div>
        <label class="check" for="anim"><input class="tick plain" type="checkbox" id="anim"><span>Flow Animation</span></label>
      </div>`, true)}
      ${this.group("Display Options", html`
        <button class="item opt"><ui-icon name="log"></ui-icon><span>Show Log Files</span></button>
        ${this.opt("o1", "Results on Computational Mesh", true)}${this.opt("o2", "Show Drag Forces", false)}${this.opt("o3", "Show Point Probes", true)}`)}
      ${this.group("Current Point Probe", html`<div class="pad probe">
        <div class="line">${select("probe", "Current Point Probe", "0 - Temporary, Simplified Model")}</div>
        <div class="line tools">${this.tool("del", "Delete")}${this.tool("pick", "Pick")}${this.tool("save", "Save")}${this.tool("winHand", "Edit")}${this.tool("winGear", "Settings")}</div>
      </div>`, true)}`;
  }
}

/* ------------------------------------------------------------------ */
/* Application shell                                                   */
/* ------------------------------------------------------------------ */

@customElement("app-root")
class AppRoot extends LitElement {
  static styles = [base, css`
    :host {
      display: flex; flex-direction: column; position: relative; height: 100vh; overflow: hidden;
      background: #f0f0f0; font: 11px "DejaVu Sans Condensed", "Noto Sans", sans-serif; color: #111;
    }
    .menu { display: flex; align-items: center; height: 22px; padding: 0 5px 2px 6px; background: #eef0fa; font: 12px Roboto, "Open Sans", sans-serif; flex: none; }
    .menu a { color: #111; text-decoration: none; padding: 0 9px; }
    .menu .logo { width: 15px; height: 16px; margin-right: 1px; }
    .wins { margin-left: auto; display: flex; gap: 8px; }
    .win { border: 0; background: none; width: 9px; height: 10px; }
    .wins svg { display: block; width: 9px; height: 10px; }
    .shade { position: absolute; top: 0; left: 36.3%; width: 27.2%; height: 1px; background: #666a78; }
    .strip { background: #eef0fa; height: 26px; display: flex; flex: none; }
    .bar { display: flex; align-items: center; height: 26px; padding-left: 6px; background: linear-gradient(#fcfcff, #d3d8e6); flex: none; }
    .tool { width: 22px; height: 22px; border: 1px solid transparent; background: none; display: flex; align-items: center; justify-content: center; gap: 2px; flex: none; }
    .tool.menuish { width: 29px; padding-left: 2px; }
    .arrow { width: 5px; height: 3px; background: #222; clip-path: polygon(0 0, 100% 0, 50% 100%); flex: none; }
    .tool.off .arrow { background: #aaa; }
    .tool.on { border-color: #4f9ccf; background: #c3e1f4; }
    .tool.on.off { border-color: #9aa6b4; background: #bfe0ea; }
    .sep { width: 4px; height: 14px; border-left: 1px solid #a5aab8; margin-left: 2px; }
    .more { width: 12px; height: 25px; background: #c8ccda; border: 0; display: flex; align-items: flex-end; justify-content: center; padding-bottom: 4px; margin-left: 2px; }
    .more svg { width: 6px; height: 6px; }
    .main { flex: 1; display: flex; min-height: 0; padding-top: 2px; }
    .side { display: flex; flex-direction: column; flex: none; }
    .left { width: 246px; margin-right: 6px; }
    .right { width: 198px; margin-left: 5px; }
    .edge { border-bottom: 1px solid #696969; flex: 1; display: flex; flex-direction: column; min-height: 0; }
    .right panel-caption { padding-left: 3px; }
    .centre { flex: 1; min-width: 0; display: flex; flex-direction: column; }
    .view { position: relative; flex: 1; min-height: 0; background: #fff; border: 2px solid #6e6e6e; border-left-color: #8a8a8a; display: flex; flex-direction: column; justify-content: space-between; padding: 5px 4px 6px; font: 11px/14px "Liberation Sans", Arial, sans-serif; color: #000064; white-space: nowrap; }
    .view contour-plot { position: absolute; inset: 0; }
    .notes { position: relative; }
    .view zone-dialog { position: absolute; left: 202px; top: 123px; font: 11px "DejaVu Sans Condensed", "Noto Sans", sans-serif; }
    .status { display: flex; align-items: center; height: 22px; flex: none; border-top: 1px solid #d4d4d4; font: 12px Roboto, "Open Sans", sans-serif; }
    .status .msg { flex: 1; }
    .cell { height: 20px; border-left: 1px solid #d0d0d0; }
    .c1 { width: 82px; } .c2 { width: 57px; } .c3 { width: 72px; } .c4 { width: 72px; } .c5 { width: 64px; }
    .marks { position: absolute; inset: 0; width: 100%; height: 100%; pointer-events: none; }
    .wm { position: absolute; right: 78px; bottom: 54px; width: 241px; color: #000; opacity: .28; pointer-events: none; font-family: "Open Sans", "Noto Sans", sans-serif; font-weight: 300; white-space: nowrap; }
    .wm1 { font-size: 20px; line-height: 26px; } .wm2 { font-size: 15px; line-height: 20px; }
  `];
  private tool(x: Tool) {
    if (x === "|") return html`<i class="sep"></i>`;
    return html`<button class=${classMap({ tool: true, on: !!x.on, off: !!x.off, menuish: !!x.menu })} aria-label=${x.label}><ui-icon name=${x.icon}></ui-icon>${x.menu ? html`<i class="arrow"></i>` : nothing}</button>`;
  }
  render() {
    const arrow = "M16 719L101 720 87 713 92 705 130 724 92 744 87 735 101 729 16 729Q11 729 11 724Q11 719 16 719Z";
    return html`
      <nav class="menu"><ui-icon class="logo" name="app"></ui-icon>${MENU.map((m) => html`<a href="#${m}">${m}</a>`)}
        <span class="wins">
          <button class="win" aria-label="Minimize"><svg viewBox="0 0 9 10"><path d="M2 8h5" stroke="#222" stroke-width="1.500"/></svg></button>
          <button class="win" aria-label="Restore"><svg viewBox="0 0 9 10"><path d="M3 4V1.500h5V6H6M1 4.500h5V9H1z" fill="none" stroke="#222"/></svg></button>
          <button class="win" aria-label="Close"><svg viewBox="0 0 9 10"><path d="M1.500 2l6 6M7.500 2l-6 6" stroke="#222" stroke-width="1.500"/></svg></button>
        </span>
      </nav>
      <i class="shade"></i>
      <div class="strip"><div class="bar">${TOOLS.map((x) => this.tool(x))}
        <button class="more" aria-label="More tools"><svg viewBox="0 0 6 6"><path d="M0 .5h6" stroke="#111"/><path d="M0 2.500h6L3 6z" fill="#111"/></svg></button></div></div>
      <main class="main">
        <aside class="side left">
          <div class="edge"><panel-caption text="Project Navigator - Data"></panel-caption><project-tree></project-tree></div>
          <dock-tabs current="Data" .tabs=${[["dataTab", "Data"], ["viewTab", "View"], ["sectTab", "Sections"]]}></dock-tabs>
        </aside>
        <section class="centre">
          <div class="view">
            <contour-plot></contour-plot>
            <div class="notes"><div>Wind Tunnel Dimensions: Dx = 229.4 m, Dy = 94.53 m, Dz = 35.83 m</div><div>Free Stream Velocity: 18.27 m/s</div></div>
            <div class="notes"><div>Time: T088 - 48.51 [s]</div><div>Mesh Information: 1 528 311 cells, 1 652 706 nodes</div>
              <div>Original Model Drag Force Sum: Fx = 10.867 kN, Fy = -1.36 kN, Fz = 25.886 kN</div>
              <div>Drag Force Sum on Computational Mesh: Fx = 10.747 kN, Fy = -1.372 kN, Fz = 26.093 kN</div></div>
            <zone-dialog role="dialog" aria-label="Edit Zone"></zone-dialog>
          </div>
          <dock-tabs current="Simulation" .tabs=${[["model", "Models"], ["zone", "Zones"], ["meshTab", "Mesh Refinements"], ["simul", "Simulation"]]}></dock-tabs>
        </section>
        <aside class="side right">
          <div class="edge"><panel-caption text="Edit Bar - Simulation"></panel-caption><edit-bar></edit-bar></div>
          <dock-tabs current="Edit Bar" .tabs=${[["tools", "Edit Bar"], ["clip", "Clipper"]]}></dock-tabs>
        </aside>
      </main>
      <footer class="status"><span class="msg">For Help, press F1</span><span class="cell c1"></span><span class="cell c2"></span><span class="cell c3"></span><span class="cell c4"></span><span class="cell c5"></span></footer>
      <svg class="marks" viewBox="0 0 1914 1134">
        <defs><filter id="sh" x="-10%" y="-10%" width="120%" height="125%"><feDropShadow dx="1" dy="4" stdDeviation="3" flood-color="#000" flood-opacity=".5"/></filter></defs>
        <ellipse cx="1409" cy="211" rx="153" ry="143" fill="none" stroke="#f6483f" stroke-width="7" filter="url(#sh)"/>
        <path d=${arrow} transform="translate(1590 0)" fill="#f6483f"/>
        <path d=${arrow} transform="translate(356 -168)" fill="#f6483f"/>
      </svg>
      <div class="wm"><div class="wm1">Activate Windows</div><div class="wm2">Go to Settings to activate Windows.</div></div>`;
  }
}
